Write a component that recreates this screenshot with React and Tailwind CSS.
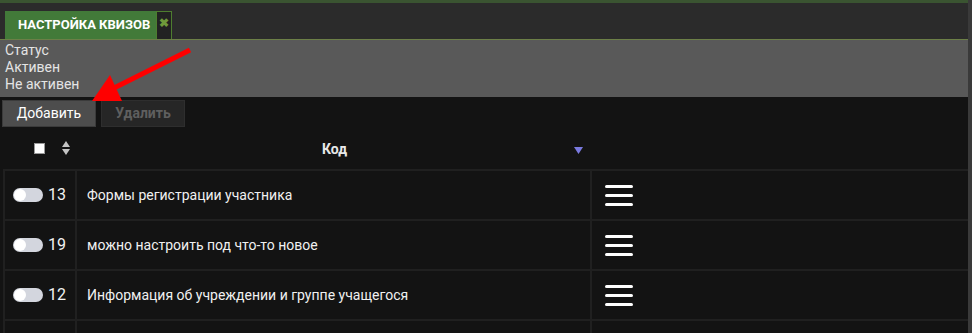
import React from "react";

const rows = [
  { id: 13, name: "Формы регистрации участника" },
  { id: 19, name: "можно настроить под что-то новое" },
  { id: 12, name: "Информация об учреждении и группе учащегося" },
];

const Toggle = () => (
  <span className="inline-flex items-center w-[30px] h-[14px] rounded-full bg-[#d3d6de] pl-[1px]">
    <span className="w-[12px] h-[12px] rounded-full bg-white" />
  </span>
);

const Burger = () => (
  <div className="flex flex-col gap-[6px] w-[28px]">
    <span className="h-[3px] rounded-full bg-white" />
    <span className="h-[3px] rounded-full bg-white" />
    <span className="h-[3px] rounded-full bg-white" />
  </div>
);

export default function App() {
  return (
    <div
      className="relative w-[972px] h-[333px] overflow-hidden bg-[#131313] flex"
      style={{ fontFamily: "Roboto, 'Liberation Sans', sans-serif" }}
    >
      <div className="flex-1 flex flex-col">
        {/* top strip */}
        <div className="shrink-0 h-[3px] bg-[#3a5431]" />
        <div className="shrink-0 h-[36px] bg-[#2b2b2b] flex items-end pl-[5px]">
          <div className="h-[28px] flex">
            <div className="bg-[#427a39] w-[151px] pl-[13px] flex items-center text-white text-[13px] font-bold">
              НАСТРОЙКА КВИЗОВ
            </div>
            <div className="w-[16px] border border-b-0 border-[#4e7d2f] bg-[#222] flex justify-center pt-[5px]">
              <span className="text-[#6f9a3b] text-[12px] font-bold leading-none">✖</span>
            </div>
          </div>
        </div>

        {/* status panel */}
        <div className="shrink-0 h-[58px] bg-[#595959] border-t border-[#6c7f47] pl-[5px] pt-[2px] text-[14px] leading-[17px] text-[#e4e4e4]">
          <div>Статус</div>
          <div>Активен</div>
          <div>Не активен</div>
        </div>

        {/* buttons */}
        <div className="shrink-0 flex gap-[5px] pl-[2px] pt-[3px]">
          <button className="w-[94px] h-[27px] bg-[#4d4d4d] border border-[#3b3b3b] text-white text-[14px]">
            Добавить
          </button>
          <button className="w-[84px] h-[27px] bg-[#262626] border border-[#2e2e2e] text-[#5f5f5f] text-[14px] font-bold">
            Удалить
          </button>
        </div>

        {/* table */}
        <div className="shrink-0 ml-[3px] flex flex-col">
          <div className="shrink-0 h-[44px] flex items-center border-b-2 border-[#202020]">
            <div className="w-[74px] flex items-center pl-[31px] gap-[17px]">
              <span className="w-[11px] h-[11px] bg-white border border-[#999]" />
              <svg width="8" height="14" viewBox="0 0 8 14">
                <polygon points="4,0 8,6 0,6" fill="#c4c4c4" />
                <polygon points="0,8 8,8 4,14" fill="#c4c4c4" />
              </svg>
            </div>
            <div className="w-[515px] relative flex justify-center pt-[2px]">
              <span className="text-[#e8e8e8] text-[14px] font-bold">Код</span>
              <svg className="absolute right-[9px] top-[10px]" width="9" height="7" viewBox="0 0 9 7">
                <polygon points="0,0 9,0 4.5,7" fill="#7a7ae0" />
              </svg>
            </div>
            <div className="flex-1" />
          </div>

          {rows.map((r) => (
            <div key={r.id} className="shrink-0 h-[50px] flex border-b-2 border-l-2 border-[#202020]">
              <div className="w-[72px] flex items-center pl-[8px] gap-[5px] border-r-2 border-[#202020]">
                <Toggle />
                <span className="text-[#f2f2f2] text-[16px]">{r.id}</span>
              </div>
              <div className="w-[515px] flex items-center pl-[10px] text-[#f0f0f0] text-[14px] border-r-2 border-[#202020]">
                {r.name}
              </div>
              <div className="flex-1 flex items-center pl-[13px]">
                <Burger />
              </div>
            </div>
          ))}
          <div className="shrink-0 h-[50px] flex border-l-2 border-[#202020]">
            <div className="w-[72px] border-r-2 border-[#202020]" />
            <div className="w-[515px] border-r-2 border-[#202020]" />
          </div>
        </div>
      </div>

      {/* scrollbar */}
      <div className="w-[4px] bg-[#3a3a3a]" />

      {/* annotation arrow */}
      <svg className="absolute left-0 top-0 pointer-events-none" width="972" height="333">
        <line x1="190" y1="50" x2="112" y2="89" stroke="#ff0000" strokeWidth="5" />
        <polygon points="92,101 110,75 122,101" fill="#ff0000" />
      </svg>
    </div>
  );
}
